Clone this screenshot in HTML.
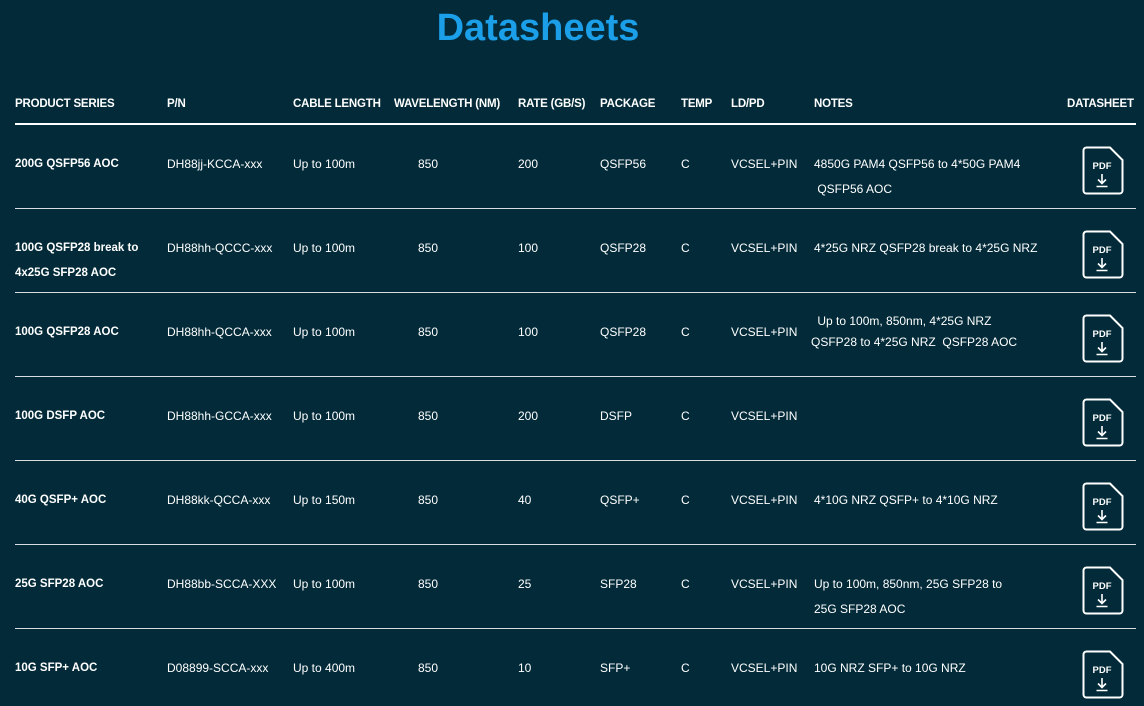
<!DOCTYPE html><html><head><style>
body{margin:0;width:1144px;height:706px;background:#022a38;overflow:hidden;font-family:"Liberation Sans",sans-serif;color:#fff;position:relative}
.t{position:absolute;top:7px;left:0;width:1076px;text-align:center;font-size:38px;font-weight:bold;color:#1a9fe8}
.a{position:absolute;font-size:12px;white-space:nowrap;line-height:14px}
.h{font-weight:bold;font-size:11.5px;letter-spacing:-0.2px}
.b{font-weight:bold;font-size:11.5px}
.l{position:absolute;left:15px;width:1121px;height:1px;background:#d8dde0}
svg{position:absolute}
</style></head><body>
<div class="t">Datasheets</div>
<div class="a h" style="left:15px;top:97px">PRODUCT SERIES</div>
<div class="a h" style="left:167px;top:97px">P/N</div>
<div class="a h" style="left:293px;top:97px">CABLE LENGTH</div>
<div class="a h" style="left:394px;top:97px">WAVELENGTH (NM)</div>
<div class="a h" style="left:518px;top:97px">RATE (GB/S)</div>
<div class="a h" style="left:600px;top:97px">PACKAGE</div>
<div class="a h" style="left:681px;top:97px">TEMP</div>
<div class="a h" style="left:731px;top:97px">LD/PD</div>
<div class="a h" style="left:814px;top:97px">NOTES</div>
<div class="a h" style="left:1067px;top:97px">DATASHEET</div>
<div class="l" style="top:123px;height:2px;background:#fff"></div>
<div id="rows"></div>
<script>
var R=[
["200G QSFP56 AOC","","DH88jj-KCCA-xxx","Up to 100m","200","QSFP56",["4850G PAM4 QSFP56 to 4*50G PAM4","&nbsp;QSFP56 AOC"]],
["100G QSFP28 break to","4x25G SFP28 AOC","DH88hh-QCCC-xxx","Up to 100m","100","QSFP28",["4*25G NRZ QSFP28 break to 4*25G NRZ"]],
["100G QSFP28 AOC","","DH88hh-QCCA-xxx","Up to 100m","100","QSFP28",["&nbsp;Up to 100m, 850nm, 4*25G NRZ","QSFP28 to 4*25G NRZ&nbsp; QSFP28 AOC"],-11],
["100G DSFP AOC","","DH88hh-GCCA-xxx","Up to 100m","200","DSFP",[]],
["40G QSFP+ AOC","","DH88kk-QCCA-xxx","Up to 150m","40","QSFP+",["4*10G NRZ QSFP+ to 4*10G NRZ"]],
["25G SFP28 AOC","","DH88bb-SCCA-XXX","Up to 100m","25","SFP28",["Up to 100m, 850nm, 25G SFP28 to","25G SFP28 AOC"]],
["10G SFP+ AOC","","D08899-SCCA-xxx","Up to 400m","10","SFP+",["10G NRZ SFP+ to 10G NRZ"]]];
var h="";
R.forEach(function(r,i){var y=157+i*84;
h+='<div class="a b" style="left:15px;top:'+y+'px">'+r[0]+'</div>';
if(r[1])h+='<div class="a b" style="left:15px;top:'+(y+25)+'px">'+r[1]+'</div>';
h+='<div class="a" style="left:167px;top:'+y+'px">'+r[2]+'</div>';
h+='<div class="a" style="left:293px;top:'+y+'px">'+r[3]+'</div>';
h+='<div class="a" style="left:418px;top:'+y+'px">850</div>';
h+='<div class="a" style="left:518px;top:'+y+'px">'+r[4]+'</div>';
h+='<div class="a" style="left:600px;top:'+y+'px">'+r[5]+'</div>';
h+='<div class="a" style="left:681px;top:'+y+'px">C</div>';
h+='<div class="a" style="left:731px;top:'+y+'px">VCSEL+PIN</div>';
var ny=y+(r[7]||0);
r[6].forEach(function(n,j){h+='<div class="a" style="left:'+(i==2&&j==1?811:814)+'px;top:'+(ny+j*(i==2?21:25))+'px">'+n+'</div>';});
var iy=y-11;
h+='<svg style="left:1082px;top:'+iy+'px" width="42" height="49" viewBox="0 0 42 49"><path d="M4 1.5H28L40.5 14V44.5a3 3 0 0 1-3 3H4.5a3 3 0 0 1-3-3V4.5a3 3 0 0 1 3-3z" fill="none" stroke="#fff" stroke-width="2"/><text x="20" y="23" font-family="Liberation Sans" font-size="9.5" font-weight="bold" fill="#fff" text-anchor="middle">PDF</text><path d="M20 28V37M16 33.5L20 37.5L24 33.5M14.5 40.5H25.5" fill="none" stroke="#fff" stroke-width="1.6"/></svg>';
if(i<6)h+='<div class="l" style="top:'+(208+i*84)+'px"></div>';
});
document.getElementById("rows").innerHTML=h;
</script>
</body></html>
